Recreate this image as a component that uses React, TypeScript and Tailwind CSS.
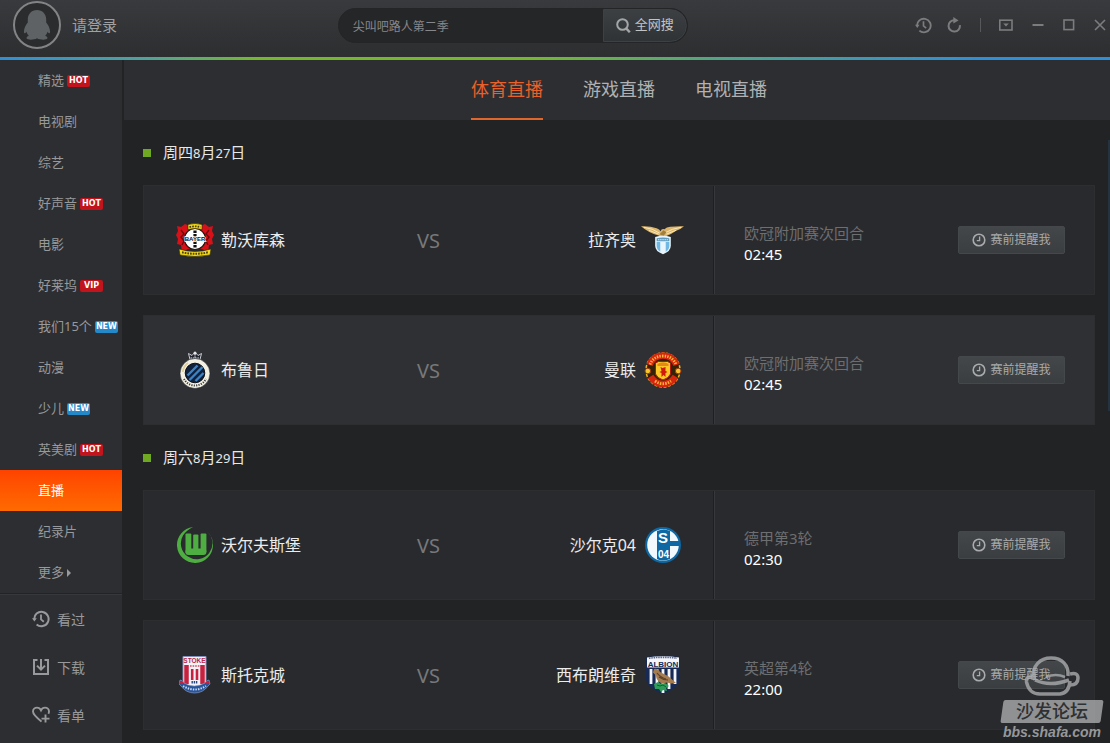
import React, { useState } from 'react';
import clsx from 'clsx';

type Badge = 'HOT' | 'VIP' | 'NEW';

interface NavEntry {
  label: string;
  badge?: Badge;
  more?: boolean;
}

interface Match {
  home: string;
  away: string;
  homeLogo: React.ReactNode;
  awayLogo: React.ReactNode;
  round: string;
  time: string;
}

interface MatchDay {
  weekday: string;
  month: string;
  day: string;
  matches: Match[];
}

/* ---------- Icons ---------- */

const HistoryIcon = ({ className }: { className?: string }) => (
  <svg viewBox="0 0 18 18" className={className} fill="none" stroke="currentColor" strokeWidth="2">
    <path d="M2.2 9.5a7.2 7.2 0 1 1 2.4 4.9" />
    <path d="M0 8.3h4.8L2.4 11.6z" fill="currentColor" stroke="none" />
    <path d="M9 4.6v4.8l2.8 2.4" strokeWidth="1.8" />
  </svg>
);

const RefreshIcon = () => (
  <svg viewBox="0 0 16 16" className="h-4 w-4" fill="none" stroke="currentColor" strokeWidth="2">
    <path d="M8.5 3.2a5.7 5.7 0 1 0 5.4 5" />
    <path d="M7.3 0v6.6l5.3-3.2z" fill="currentColor" stroke="none" />
  </svg>
);

const SkinIcon = () => (
  <svg viewBox="0 0 14 12" className="h-3 w-3.5" fill="none" stroke="currentColor" strokeWidth="1.6">
    <rect x="0.8" y="1.2" width="12.2" height="9.8" />
    <path d="M4.2 4.6h5.6L7 7.6z" fill="currentColor" stroke="none" />
  </svg>
);

const MinimizeIcon = () => (
  <svg viewBox="0 0 12 12" className="h-3 w-3" stroke="currentColor" strokeWidth="2">
    <path d="M0.5 6h11" />
  </svg>
);

const MaximizeIcon = () => (
  <svg viewBox="0 0 12 12" className="h-3 w-3" fill="none" stroke="currentColor" strokeWidth="1.6">
    <rect x="1" y="1" width="9.6" height="9.6" />
  </svg>
);

const CloseIcon = () => (
  <svg viewBox="0 0 12 12" className="h-3 w-3" stroke="currentColor" strokeWidth="1.6">
    <path d="M1 1l10 10M11 1L1 11" />
  </svg>
);

const SearchIcon = () => (
  <svg viewBox="0 0 15 15" className="h-[15px] w-[15px]" fill="none" stroke="currentColor" strokeWidth="2">
    <circle cx="6.5" cy="6.5" r="5.3" />
    <path d="M10.4 10.6l3.4 3.6" strokeWidth="2.4" />
  </svg>
);

const DownloadIcon = ({ className }: { className?: string }) => (
  <svg viewBox="0 0 18 18" className={className} fill="none" stroke="currentColor" strokeWidth="2">
    <path d="M5.5 2H2v14h14V2h-3.5" />
    <path d="M9 1v9.5M5 7.6l4 4 4-4" />
  </svg>
);

const HeartPlusIcon = ({ className }: { className?: string }) => (
  <svg viewBox="0 0 18 18" className={className} fill="none" stroke="currentColor" strokeWidth="1.9">
    <path d="M9.6 15.6C5 12 1 9 1 5.6 1 3.1 2.9 1.6 5 1.6c1.8 0 3.2 1 4 2.7.8-1.7 2.2-2.7 4-2.7 2.2 0 4 1.6 4 4 0 .8-.2 1.5-.6 2.2" />
    <path d="M13.5 8.6v8M9.5 12.6h8" />
  </svg>
);

const ClockIcon = () => (
  <svg viewBox="0 0 14 14" className="h-3.5 w-3.5" fill="none" stroke="currentColor">
    <circle cx="7" cy="7" r="5.8" strokeWidth="1.6" />
    <path d="M7.6 3.6V7.6H4.8" strokeWidth="1.3" />
  </svg>
);

const Penguin = () => (
  <svg viewBox="0 0 28 30" className="h-[30px] w-7" fill="#5e6265">
    <path d="M14 0C8.5 0 4.8 4.2 4.8 9.5v3C2.5 15.5.6 19 1 22.5c.2 1.3 1.2 1 2.4-.8.5 1.7 1.3 3 2.4 4.1-1.9.7-2.5 1.7-2.1 2.7.6 1.5 7.3 1.6 10.3-.3 3 1.9 9.7 1.8 10.3.3.4-1-.2-2-2.1-2.7 1.1-1.1 1.9-2.4 2.4-4.1 1.2 1.8 2.2 2.1 2.4.8.4-3.5-1.5-7-3.8-10v-3C23.2 4.2 19.5 0 14 0z" />
  </svg>
);

/* ---------- Club crests ---------- */

const LeverkusenCrest = () => (
  <svg viewBox="0 0 40 34" className="h-[34px] w-10">
    <path d="M2 3l4 1 4-3 5 2 5-2 5 2 5-2 4 3 4-1-1 5 2 4-2 4 1 5-4 1-1 7-6-3H13l-6 3-1-7-4-1 1-5-2-4 2-4z" fill="#d81018" />
    <path d="M6 7l3 4-3 3 3 4-2 4M34 7l-3 4 3 3-3 4 2 4" stroke="#6b0a0e" strokeWidth="1.4" fill="none" />
    <circle cx="20" cy="16" r="10.5" fill="#fff" stroke="#20140c" strokeWidth="1.2" />
    <path d="M13 1.5q7-2 14 0v5q-7-2-14 0z" fill="#f6dc1c" stroke="#2d2608" strokeWidth=".6" />
    <path d="M4 26q16 5 32 0l-1 6q-15 3-30 0z" fill="#f6dc1c" stroke="#2d2608" strokeWidth=".6" />
    <path d="M20 7.5v17" stroke="#111" strokeWidth="3.2" strokeDasharray="2.6 1" />
    <text x="20" y="18.2" fontSize="6" fontWeight="700" textAnchor="middle" fontFamily="Liberation Sans, sans-serif" fill="#111" stroke="#fff" strokeWidth="1.4" paintOrder="stroke">BAYER</text>
    <path d="M14.5 4q5.5-1.2 11 0" stroke="#4a400c" strokeWidth="1.8" strokeDasharray="1.7 1" fill="none" />
    <path d="M7 29.3q13 3 26 0" stroke="#4a400c" strokeWidth="2" strokeDasharray="1.7 1" fill="none" />
  </svg>
);

const LazioCrest = () => (
  <svg viewBox="0 0 44 30" className="h-[30px] w-11">
    <path d="M0 1q9-.5 16 2 3 1 4 3 1-3 4-2 2-2 6-2.5Q37 .8 44 1q-3 3-8 4.5Q31 9 26 11l-4 1.5-4-2Q8 8 0 1z" fill="#dcb56c" />
    <path d="M3 2q9 1 16 6M41 2q-9 1-17 6M8 5l10 4M36 5l-10 4" stroke="#fbe8b6" strokeWidth="1" fill="none" />
    <path d="M19 9l4-4 3 2-3 4z" fill="#a37f3e" />
    <path d="M14.5 12q8-2.5 16 0v9q0 6-8 8.5-8-2.5-8-8.5z" fill="#e8f5fc" />
    <path d="M16 17h3.7v10Q16 25 16 21zM25.3 17H29v4q0 4-3.7 6z" fill="#70b8e4" />
    <path d="M16 13.2q6.5-1.7 13 0v3H16z" fill="#629cbc" />
    <path d="M17.5 14.7h10" stroke="#e8f5fc" strokeWidth="1" strokeDasharray="1.3 .9" />
  </svg>
);

const BruggeCrest = () => (
  <svg viewBox="0 0 32 38" className="h-[38px] w-8">
    <path d="M11 8.5L9.5 2.5l3.5 2 3-3.5 3 3.5 3.5-2L21 8.5z" fill="#20242e" stroke="#c9cbd2" strokeWidth="1" />
    <circle cx="16" cy="2" r="1.5" fill="#e6e6ea" />
    <path d="M11.5 7h9M16 3v5" stroke="#e6e6ea" strokeWidth="1" strokeDasharray="1.5 .8" />
    <circle cx="16" cy="22.5" r="15" fill="#f4f1e3" stroke="#1c2330" strokeWidth=".6" />
    <circle cx="16" cy="22" r="9.8" fill="#10213d" stroke="#0b0f18" strokeWidth="1" />
    <path d="M8.5 24.5l10-10M10.5 29l13-13M16.5 30l8-8" stroke="#3d83c4" strokeWidth="2.4" />
    <path d="M5 28a12.5 12.5 0 0 0 22 0" stroke="#3a3d44" strokeWidth="2" strokeDasharray="1.2 1.2" fill="none" />
    <path d="M3.8 21A12.5 12.5 0 0 1 9 12" stroke="#e0d09a" strokeWidth="2" fill="none" />
  </svg>
);

const UnitedCrest = () => (
  <svg viewBox="0 0 38 38" className="h-[38px] w-[38px]">
    <circle cx="19" cy="19" r="17" fill="#352208" stroke="#f1b51d" strokeWidth="1.5" strokeDasharray="3 1.6" />
    <path d="M5.5 14Q9 4.5 19 4.5T32.5 14" stroke="#d5260f" strokeWidth="6.5" fill="none" />
    <path d="M6.5 25.5Q11 33 19 33t12.5-7.5" stroke="#d5260f" strokeWidth="6.5" fill="none" />
    <path d="M6 13.5Q9.5 5 19 5t13 8.5" stroke="#ffb437" strokeWidth="2.8" strokeDasharray="1.4 1.2" fill="none" />
    <path d="M11 30q8 5.5 16 0" stroke="#ffb437" strokeWidth="2.8" strokeDasharray="1.5 1.2" fill="none" />
    <path d="M11.5 12l3-1.5h9l3 1.5v11q-1.5 4-7.5 6-6-2-7.5-6z" fill="#fcc927" stroke="#b01c0c" />
    <path d="M13.5 13q5.5-3.5 11 0v2h-11z" fill="#e58a1a" />
    <path d="M16.5 16l2 1 3-1v4l2 1-2 1v4l-2-2-2 2v-4l-2-1 2-1z" fill="#cf1b0b" />
    <circle cx="3.8" cy="20" r="2.8" fill="#f6c72b" stroke="#9d390d" />
    <circle cx="34.2" cy="20" r="2.8" fill="#f6c72b" stroke="#9d390d" />
  </svg>
);

const WolfsburgCrest = () => (
  <svg viewBox="0 0 38 38" className="h-[38px] w-[38px]">
    <path d="M17 1A18 18 0 1 0 37 19 18 18 0 0 0 31 5.5 15.8 15.8 0 1 1 7 9.5Q10.5 4 17 1z" fill="#4fae42" />
    <g fill="#4fae42">
      <rect x="9.5" y="7.5" width="5.8" height="20" rx="1" />
      <rect x="17.2" y="8.5" width="5.2" height="19" rx="1" />
      <rect x="24.6" y="7.5" width="5.8" height="19" rx="1" />
      <rect x="9.5" y="22.5" width="12.9" height="6.5" rx="3" />
      <rect x="17.2" y="22.5" width="13.2" height="6.5" rx="3" />
    </g>
  </svg>
);

const SchalkeCrest = () => (
  <svg viewBox="0 0 38 38" className="h-[38px] w-[38px]">
    <circle cx="19" cy="19" r="18" fill="#0d68a4" />
    <circle cx="19" cy="19" r="15.8" fill="#f1f9fd" />
    <path d="M13 5v28q5 3 13 0V20h9v-5h-9V5q-6-3-13 0z" fill="#0d68a4" />
    <text x="19" y="17" fontSize="15" fontWeight="700" textAnchor="middle" fontFamily="Liberation Sans, sans-serif" fill="#fff">S</text>
    <text x="19.5" y="31.5" fontSize="10" fontWeight="700" textAnchor="middle" fontFamily="Liberation Sans, sans-serif" fill="#fff">04</text>
  </svg>
);

const StokeCrest = () => (
  <svg viewBox="0 0 32 38" className="h-[38px] w-8">
    <path d="M4 .5h23v25q-4 6-11.5 8Q8 31 4 25.5z" fill="#f4f2f6" stroke="#8090bd" />
    <text x="15.5" y="7" fontSize="6.5" fontWeight="700" textAnchor="middle" fontFamily="Liberation Sans, sans-serif" fill="#b32846">STOKE</text>
    <path d="M7.5 9v19M23.5 9v19" stroke="#c6213f" strokeWidth="4.5" />
    <path d="M13.2 13v11M18 13v11" stroke="#c6213f" strokeWidth="2.6" />
    <path d="M11 10h9.5" stroke="#d67587" strokeWidth="2" strokeDasharray="1.6 1" />
    <path d="M12.5 26.3h6" stroke="#28437f" strokeWidth="2.5" strokeDasharray="1.4 .8" />
    <path d="M1 24q2 0 4 3 10 6 21 0 2-3 4-3l1 4-2 2q-5 7-13.5 7T2 30l-2-2z" fill="#29549a" stroke="#95a5ca" strokeWidth=".6" />
    <path d="M4 30q12 7 23 0" stroke="#c9d7ef" strokeWidth="2" strokeDasharray="1.5 1.1" fill="none" />
    <path d="M1 26l3 1M27 27l3-1" stroke="#c6213f" strokeWidth="2" />
  </svg>
);

const AlbionCrest = () => (
  <svg viewBox="0 0 36 40" className="h-10 w-9">
    <path d="M1 2q17-3 34 0v22q-1 9-17 15Q2 33 1 24z" fill="#172a55" />
    <path d="M2 2.5q16-2.5 32 0v10H2z" fill="#f4f5f8" />
    <path d="M4 3.2q14-1.7 28 0" stroke="#5b6680" strokeWidth="1.6" strokeDasharray="1.5 .8" fill="none" />
    <text x="18" y="11.6" fontSize="8" fontWeight="700" textAnchor="middle" fontFamily="Liberation Sans, sans-serif" fill="#172a55">ALBION</text>
    <path d="M6 14v15M12 14v20M18 14v24M24 14v20M30 14v15" stroke="#f4f5f8" strokeWidth="2.8" />
    <path d="M9 14q4-1 6 3l8 4 8 7-5 .5-4-1-5 1q-6-3-6-8l-3-3z" fill="#a57c50" />
    <path d="M12 18q3 4 9 6M14 22q4 3 9 3" stroke="#604329" strokeWidth="1.2" fill="none" />
    <path d="M9 29l4-2 3 2 4-1 4 3-3 2 1 3-4-1-2 2-2-3-4 0z" fill="#2f9d59" />
    <path d="M12 30l3 1 3-1 3 2" stroke="#0d6033" strokeWidth="1" fill="none" />
  </svg>
);

/* ---------- Data ---------- */

const NAV: NavEntry[] = [
  { label: '精选', badge: 'HOT' },
  { label: '电视剧' },
  { label: '综艺' },
  { label: '好声音', badge: 'HOT' },
  { label: '电影' },
  { label: '好莱坞', badge: 'VIP' },
  { label: '我们15个', badge: 'NEW' },
  { label: '动漫' },
  { label: '少儿', badge: 'NEW' },
  { label: '英美剧', badge: 'HOT' },
  { label: '直播' },
  { label: '纪录片' },
  { label: '更多', more: true },
];

const TOOLS = [
  { label: '看过', Icon: HistoryIcon },
  { label: '下载', Icon: DownloadIcon },
  { label: '看单', Icon: HeartPlusIcon },
];

const TABS = ['体育直播', '游戏直播', '电视直播'];

const DAYS: MatchDay[] = [
  {
    weekday: '周四',
    month: '8',
    day: '27',
    matches: [
      { home: '勒沃库森', away: '拉齐奥', homeLogo: <LeverkusenCrest />, awayLogo: <LazioCrest />, round: '欧冠附加赛次回合', time: '02:45' },
      { home: '布鲁日', away: '曼联', homeLogo: <BruggeCrest />, awayLogo: <UnitedCrest />, round: '欧冠附加赛次回合', time: '02:45' },
    ],
  },
  {
    weekday: '周六',
    month: '8',
    day: '29',
    matches: [
      { home: '沃尔夫斯堡', away: '沙尔克04', homeLogo: <WolfsburgCrest />, awayLogo: <SchalkeCrest />, round: '德甲第3轮', time: '02:30' },
      { home: '斯托克城', away: '西布朗维奇', homeLogo: <StokeCrest />, awayLogo: <AlbionCrest />, round: '英超第4轮', time: '22:00' },
    ],
  },
];

/* ---------- Layout parts ---------- */

const Header = () => (
  <header className="shrink-0">
    <div className="flex h-[57px] items-center bg-linear-to-b from-[#393a3d] to-[#2d2e30] pb-[7px]">
      <div className="flex-4">
        <button className="ml-[13px] flex items-center gap-[11px] text-[15px] text-[#a0a1a2]">
          <span className="flex h-12 w-12 items-center justify-center rounded-full border-2 border-[#838485] bg-[#2b2c2e]">
            <Penguin />
          </span>
          请登录
        </button>
      </div>

      <form className="flex h-[35px] w-[350px] shrink-0 overflow-hidden rounded-full border border-[#242527] bg-[#252628]" onSubmit={(e) => e.preventDefault()}>
        <input
          aria-label="搜索"
          defaultValue="尖叫吧路人第二季"
          className="min-w-0 flex-1 bg-transparent pt-1 pl-3.5 text-[12px] text-[#85878a] outline-none"
        />
        <button className="flex w-[84px] items-center gap-1 rounded-r-full border border-[#3e4144] bg-linear-to-b from-[#3d4043] to-[#303336] pl-3 text-[13px] text-[#c2c3c4]">
          <span className="text-[#a3a5a7]"><SearchIcon /></span>
          全网搜
        </button>
      </form>

      <div className="flex flex-5 items-center justify-end text-[#7b7c7e]">
        <div className="flex items-center gap-3.5">
          <button aria-label="播放历史"><HistoryIcon className="h-[17px] w-[17px]" /></button>
          <button aria-label="刷新"><RefreshIcon /></button>
        </div>
        <span className="mx-[18px] h-3.5 w-px bg-[#57585a]" />
        <div className="mr-1 flex items-center gap-[19px]">
          <button aria-label="换肤"><SkinIcon /></button>
          <button aria-label="最小化"><MinimizeIcon /></button>
          <button aria-label="最大化"><MaximizeIcon /></button>
          <button aria-label="关闭"><CloseIcon /></button>
        </div>
      </div>
    </div>
    <div className="h-[3px] bg-[linear-gradient(to_right,#2f8fd6_0%,#4fa39b_13%,#74b82e_23%,#74b82e_48%,#4fa38c_66%,#2f8fd6_88%)]" />
  </header>
);

const NavBadge = ({ kind }: { kind: Badge }) => (
  <span
    className={clsx(
      "flex h-3 w-[23px] items-center justify-center rounded-xs font-['DejaVu_Sans',sans-serif] text-[8px] leading-3 font-bold text-white",
      kind === 'NEW' ? 'bg-[#2389c9]' : 'bg-[#c1141c]',
    )}
  >
    {kind}
  </span>
);

const Sidebar = () => {
  const [current, setCurrent] = useState('直播');

  return (
    <aside className="w-[124px] shrink-0 border-r-2 border-[#222325] bg-[#2d2e31] text-[#98999b]">
      <nav className="border-b border-[#222325]">
        {NAV.map((item) => (
          <button
            key={item.label}
            onClick={() => setCurrent(item.label)}
            className={clsx(
              'flex h-[41px] w-full items-center gap-[3px] pl-[38px] text-[13px] whitespace-nowrap',
              current === item.label && 'bg-linear-to-b from-[#ff4200] to-[#ff6a00] text-white',
            )}
          >
            {item.label}
            {item.badge && <NavBadge kind={item.badge} />}
            {item.more && (
              <svg viewBox="0 0 4 8" className="h-2 w-1" fill="currentColor"><path d="M0 0l4 4-4 4z" /></svg>
            )}
          </button>
        ))}
      </nav>
      <div className="border-t border-[#37383b]">
        {TOOLS.map(({ label, Icon }) => (
          <button key={label} className="flex h-12 w-full items-center gap-[7px] pl-8 text-[14px]">
            <Icon className="h-[18px] w-[18px]" />
            {label}
          </button>
        ))}
      </div>
    </aside>
  );
};

const MatchRow = ({ match, active, onHover }: { match: Match; active: boolean; onHover: () => void }) => (
  <li
    onMouseEnter={onHover}
    className={clsx('flex h-[110px] border border-[#2d2e30]', active ? 'bg-[#2f3033]' : 'bg-[#292a2d]')}
  >
    <div className="grid w-3/5 grid-cols-[1fr_auto_1fr] items-center border-r border-[#1e1f21] px-[29px] text-[16px] text-[#ececec]">
      <div className="flex items-center gap-[5px]">
        <span className="flex w-[43px] shrink-0 justify-center">{match.homeLogo}</span>
        {match.home}
      </div>
      <span className="pt-0.5 text-[20px] text-[#77787a]">VS</span>
      <div className="flex items-center justify-end gap-[5px]">
        {match.away}
        <span className="flex w-[43px] shrink-0 justify-center">{match.awayLogo}</span>
      </div>
    </div>
    <div className="flex flex-1 items-center justify-between border-l border-[#37383b] px-[29px]">
      <div className="pt-2 text-[15px] leading-[21px]">
        <p className="text-[#6d6e70]">{match.round}</p>
        <p className="text-white">{match.time}</p>
      </div>
      <button className="flex h-7 w-[107px] items-center justify-center gap-1 rounded-xs border border-[#45484b] bg-linear-to-b from-[#44474a] to-[#3a3e41] text-[12px] text-[#a9abac]">
        <ClockIcon />
        赛前提醒我
      </button>
    </div>
  </li>
);

const Watermark = () => (
  <div className="pointer-events-none absolute right-1.5 bottom-0.5 flex w-[104px] flex-col items-center opacity-80">
    <svg viewBox="0 0 56 40" className="h-10 w-14" fill="none" stroke="#a9abad" strokeWidth="3.5">
      <path d="M10 21C8 10 16 2 27 2s18 7 17 18" />
      <path d="M11 24q-1-4-6-3-3 1-2.5 5Q5 38 16 38h20q9-1 10-13" />
      <path d="M11 24q15 7 34 0" />
      <path d="M46 18q8-2 8 4 0 7-8 7" />
      <path d="M22 21q10-4 19 0" strokeWidth="2.5" />
    </svg>
    <div className="mt-1 h-[23px] w-[100px] -skew-x-8 rounded-xs bg-[#a9abad] text-center">
      <span className="inline-block skew-x-8 text-[18px] leading-[22px] font-medium text-[#303234]">沙发论坛</span>
    </div>
    <span className="font-['Liberation_Sans',sans-serif] text-[14px] leading-[18px] font-bold text-[#b3b5b7] italic">bbs.shafa.com</span>
  </div>
);

const App: React.FC = () => {
  const [tab, setTab] = useState(TABS[0]);
  const [hovered, setHovered] = useState('布鲁日');

  return (
    <div className="relative flex h-screen flex-col overflow-hidden bg-[#222325] font-['Noto_Sans','Noto_Sans_CJK_SC',sans-serif]">
      <Header />
      <div className="flex min-h-0 flex-1">
        <Sidebar />
        <main className="flex min-w-0 flex-1 flex-col">
          <div className="flex h-[60px] shrink-0 justify-center gap-10 bg-[#2d2e31] pl-1 text-[18px]">
            {TABS.map((name) => (
              <button
                key={name}
                onClick={() => setTab(name)}
                className={clsx(
                  'border-b-2',
                  tab === name ? 'border-[#e0662e] text-[#e8602a]' : 'border-transparent text-[#b0b1b2]',
                )}
              >
                {name}
              </button>
            ))}
          </div>

          <div className="flex min-h-0 flex-1">
            <div className="min-w-0 flex-1 overflow-hidden pr-[13px] pl-[19px]">
              {DAYS.map((group) => (
                <section key={group.day}>
                  <h2 className="flex h-[65px] items-center gap-3 text-[15px] text-[#e8e8e8]">
                    <span className="h-2 w-2 bg-[#6fa821]" />
                    <span>
                      {group.weekday}
                      <span className="text-[13px]">{group.month}</span>月
                      <span className="text-[13px]">{group.day}</span>日
                    </span>
                  </h2>
                  <ul className="flex flex-col gap-5">
                    {group.matches.map((match) => (
                      <MatchRow
                        key={match.home}
                        match={match}
                        active={hovered === match.home}
                        onHover={() => setHovered(match.home)}
                      />
                    ))}
                  </ul>
                </section>
              ))}
            </div>
            <div className="w-0.5 shrink-0 pt-5">
              <div className="h-[45%] bg-[#24333f]" />
            </div>
          </div>
        </main>
      </div>
      <Watermark />
    </div>
  );
};

export default App;
